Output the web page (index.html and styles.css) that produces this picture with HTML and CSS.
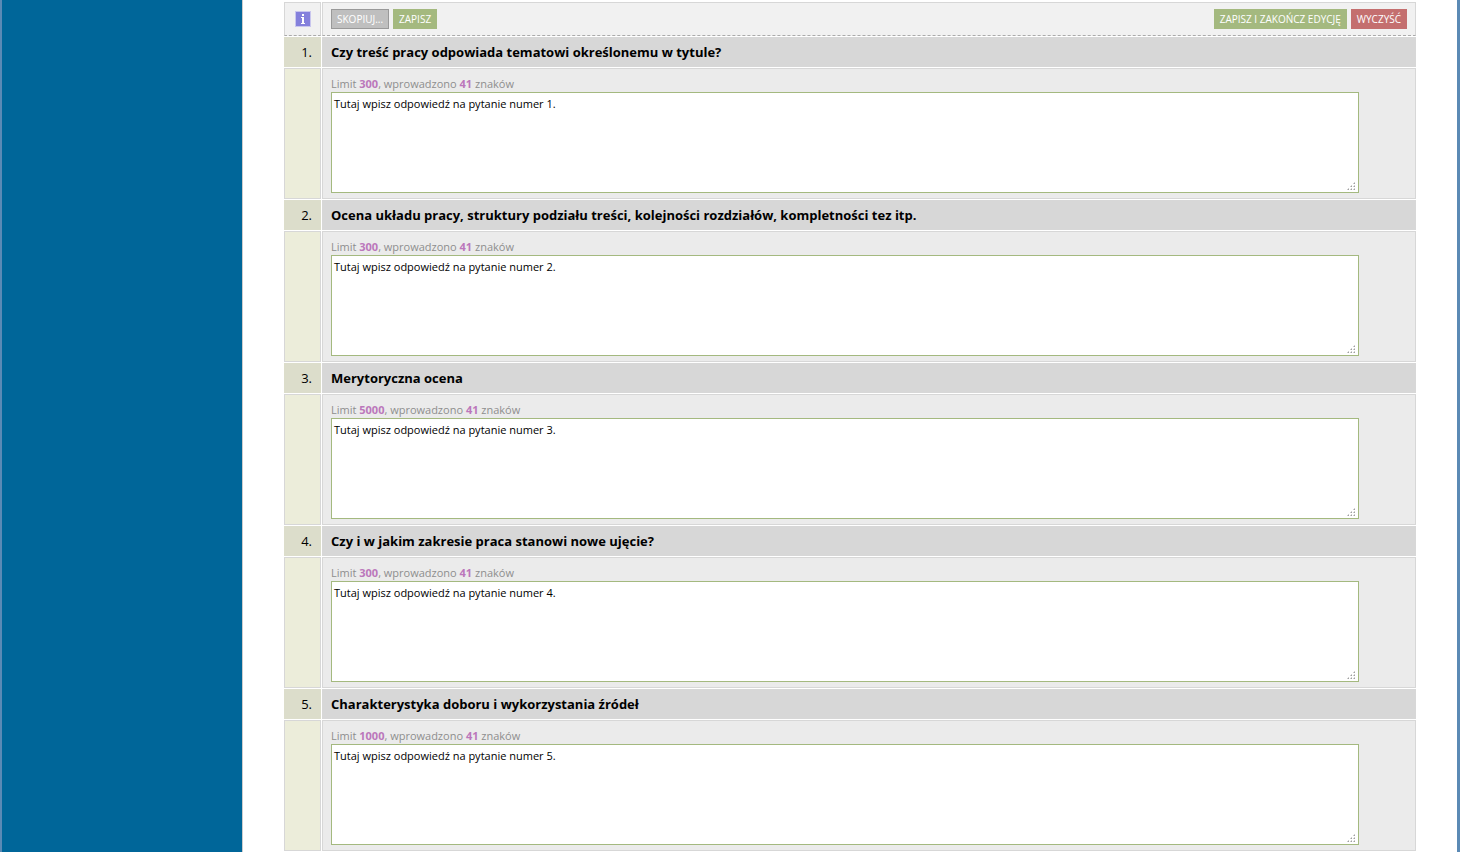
FILE: index.html
```
<!DOCTYPE html>
<html lang="pl">
<head>
    <meta charset="UTF-8">
    <meta name="viewport" content="width=device-width, initial-scale=1.0">
    <title>Edycja recenzji</title>
    <link rel="stylesheet" href="styles.css">
</head>
<body>
    <div class="page">
        <aside class="sidebar"></aside>

        <main class="content">
            <form class="recenzja">
                <!-- Pasek przycisków -->
                <div class="row toolbar">
                    <div class="cell info">
                        <svg width="16" height="16" viewBox="0 0 16 16" role="img" aria-label="Informacja">
                            <rect width="16" height="16" fill="#c9c6ee"/>
                            <rect x="1" y="1" width="14" height="14" fill="#8480dc"/>
                            <path d="M7 3h2v2H7zM6 6h3v6h1v1H6v-1h1V7H6z" fill="#fff"/>
                        </svg>
                    </div>
                    <div class="cell buttons">
                        <button type="button" class="btn copy">SKOPIUJ...</button>
                        <button type="button" class="btn save">ZAPISZ</button>
                        <button type="submit" class="btn save finish">ZAPISZ I ZAKOŃCZ EDYCJĘ</button>
                        <button type="reset" class="btn clear">WYCZYŚĆ</button>
                    </div>
                </div>

                <!-- Pytania -->
                <div class="row question">
                    <div class="cell number">1.</div>
                    <label class="cell title" for="odp1">Czy treść pracy odpowiada tematowi określonemu w tytule?</label>
                </div>
                <div class="row answer">
                    <div class="cell side"></div>
                    <div class="cell body">
                        <p class="limit">Limit <b>300</b>, wprowadzono <b>41</b> znaków</p>
                        <div class="field">
                            <textarea id="odp1">Tutaj wpisz odpowiedź na pytanie numer 1.</textarea>
                            <svg class="grip" width="9" height="9"><use href="#grip"/></svg>
                        </div>
                    </div>
                </div>

                <div class="row question">
                    <div class="cell number">2.</div>
                    <label class="cell title" for="odp2">Ocena układu pracy, struktury podziału treści, kolejności rozdziałów, kompletności tez itp.</label>
                </div>
                <div class="row answer">
                    <div class="cell side"></div>
                    <div class="cell body">
                        <p class="limit">Limit <b>300</b>, wprowadzono <b>41</b> znaków</p>
                        <div class="field">
                            <textarea id="odp2">Tutaj wpisz odpowiedź na pytanie numer 2.</textarea>
                            <svg class="grip" width="9" height="9"><use href="#grip"/></svg>
                        </div>
                    </div>
                </div>

                <div class="row question">
                    <div class="cell number">3.</div>
                    <label class="cell title" for="odp3">Merytoryczna ocena</label>
                </div>
                <div class="row answer">
                    <div class="cell side"></div>
                    <div class="cell body">
                        <p class="limit">Limit <b>5000</b>, wprowadzono <b>41</b> znaków</p>
                        <div class="field">
                            <textarea id="odp3">Tutaj wpisz odpowiedź na pytanie numer 3.</textarea>
                            <svg class="grip" width="9" height="9"><use href="#grip"/></svg>
                        </div>
                    </div>
                </div>

                <div class="row question">
                    <div class="cell number">4.</div>
                    <label class="cell title" for="odp4">Czy i w jakim zakresie praca stanowi nowe ujęcie?</label>
                </div>
                <div class="row answer">
                    <div class="cell side"></div>
                    <div class="cell body">
                        <p class="limit">Limit <b>300</b>, wprowadzono <b>41</b> znaków</p>
                        <div class="field">
                            <textarea id="odp4">Tutaj wpisz odpowiedź na pytanie numer 4.</textarea>
                            <svg class="grip" width="9" height="9"><use href="#grip"/></svg>
                        </div>
                    </div>
                </div>

                <div class="row question">
                    <div class="cell number">5.</div>
                    <label class="cell title" for="odp5">Charakterystyka doboru i wykorzystania źródeł</label>
                </div>
                <div class="row answer">
                    <div class="cell side"></div>
                    <div class="cell body">
                        <p class="limit">Limit <b>1000</b>, wprowadzono <b>41</b> znaków</p>
                        <div class="field">
                            <textarea id="odp5">Tutaj wpisz odpowiedź na pytanie numer 5.</textarea>
                            <svg class="grip" width="9" height="9"><use href="#grip"/></svg>
                        </div>
                    </div>
                </div>
            </form>
        </main>
    </div>

    <!-- Uchwyt pola tekstowego -->
    <svg class="defs" width="0" height="0">
        <symbol id="grip" viewBox="0 0 9 9">
            <path d="M7 1h1v1H7zM4 4h1v1H4zM7 4h1v1H7zM1 7h1v1H1zM4 7h1v1H4zM7 7h1v1H7z" fill="#a0a0a0"/>
            <path d="M6 1h1v1H6zM7 0h1v1H7zM3 4h1v1H3zM6 4h1v1H6zM4 3h1v1H4zM7 3h1v1H7zM0 7h1v1H0zM3 7h1v1H3zM6 7h1v1H6zM1 6h1v1H1zM4 6h1v1H4zM7 6h1v1H7z" fill="#d0d0d0"/>
        </symbol>
    </svg>
</body>
</html>
```
FILE: styles.css
```
* {
    box-sizing: border-box;
}

body {
    margin: 0;
    font-family: "Segoe UI", "Open Sans", "Noto Sans", sans-serif;
    font-size: 13px;
    color: #000;
    background: #fff;
}

.page {
    display: flex;
    min-height: 100vh;
    border-left: 2px solid #5b8ab5;
    border-right: 3px solid #5b8ab5;
}

.sidebar {
    flex: 0 0 241px;
    background: #006699;
    border-right: 1px solid #ccc;
}

.content {
    flex: 1;
    padding: 2px 41px 0;
}

.recenzja {
    display: flex;
    flex-direction: column;
    gap: 1px;
}

.row {
    display: grid;
    grid-template-columns: 37px 1fr;
    gap: 1px;
}

.cell {
    border: 1px solid #d7d7d7;
}

/* Pasek przycisków */
.toolbar .cell {
    display: flex;
    align-items: center;
    height: 34px;
    background: #f1f1f1;
    border-bottom: 1px dashed #aaa;
}

.toolbar .info {
    justify-content: center;
}

.buttons {
    gap: 4px;
    padding: 0 8px;
}

.btn {
    height: 20px;
    padding: 0 6px;
    border: 0;
    font-family: inherit;
    font-size: 10px;
    line-height: 20px;
    color: #fff;
    cursor: pointer;
}

.copy {
    padding: 0 5px;
    border: 1px solid #999;
    line-height: 18px;
    background: #bfbfbf;
}

.save {
    background: #a4b97f;
}

.finish {
    margin-left: auto;
}

.clear {
    background: #c46f6f;
}

/* Pytania */
.question .cell {
    height: 30px;
    padding: 0 8px;
    line-height: 29px;
}

.number {
    background: #dcddcb;
    border-color: #dcddcb;
    text-align: right;
}

.title {
    background: #d7d7d7;
    font-weight: bold;
}

/* Odpowiedzi */
.side {
    background: #ecedda;
}

.body {
    padding: 7px 8px 5px;
    background: #ebebeb;
}

.limit {
    margin: 0;
    font-size: 11px;
    line-height: 16px;
    color: #8e8e8e;
}

.limit b {
    color: #bb77bb;
}

.field {
    position: relative;
    width: 95.5%;
}

textarea {
    display: block;
    width: 100%;
    height: 101px;
    padding: 3px 2px;
    border: 1px solid #a4b97f;
    font-family: inherit;
    font-size: 11px;
    line-height: 16px;
    color: #000;
    background: #fff;
    resize: none;
}

.grip {
    position: absolute;
    right: 3px;
    bottom: 2px;
}

.defs {
    position: absolute;
}
```
